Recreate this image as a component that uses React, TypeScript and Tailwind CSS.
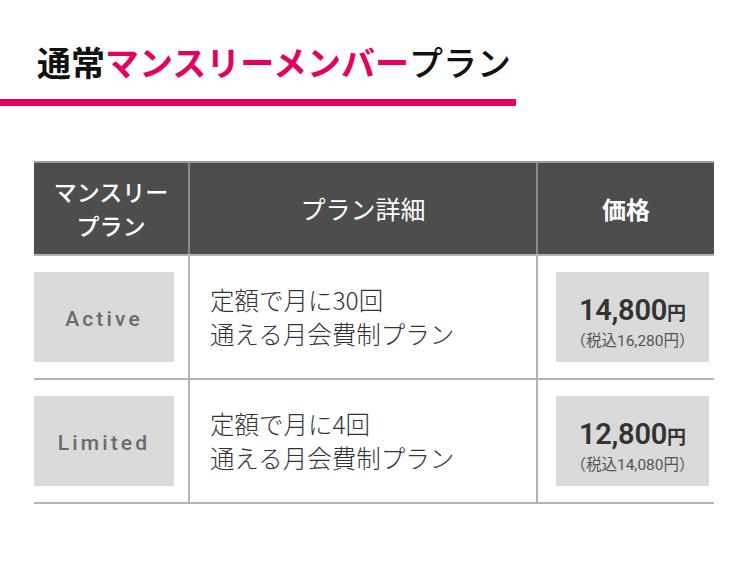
import React from "react";

type Plan = {
  name: string;
  line1: string;
  price: string;
  taxIncluded: string;
};

const plans: Plan[] = [
  { name: "Active", line1: "定額で月に30回", price: "14,800", taxIncluded: "16,280" },
  { name: "Limited", line1: "定額で月に4回", price: "12,800", taxIncluded: "14,080" },
];

const jp = "font-['Noto_Sans_CJK_JP',sans-serif]";
const num = "font-['Roboto','Noto_Sans_CJK_JP',sans-serif]";

function PlanRow({ plan }: { plan: Plan }) {
  return (
    <div className="grid grid-cols-[154px_348px_178px] h-[124px] border-b-2 border-[#b4b4b4]">
      <div className="flex items-center pr-[14px]">
        <div
          className={`w-full h-[90px] bg-[#dadada] flex items-center justify-center pt-[6px] text-[21px] tracking-[0.15em] font-medium text-[#6a6a6a] ${num}`}
        >
          {plan.name}
        </div>
      </div>
      <div className="border-l-2 border-[#b4b4b4] flex flex-col justify-center pl-[20px]">
        <p className={`text-[24.5px] leading-[34px] font-light text-[#333] ${jp}`}>
          {plan.line1}
          <br />
          通える月会費制プラン
        </p>
      </div>
      <div className="border-l-2 border-[#b4b4b4] flex items-center pl-[18px] pr-[5px]">
        <div className="w-full h-[90px] bg-[#dadada] flex flex-col items-center justify-center pt-[12px] text-[#333]">
          <p className={`leading-none ${num}`}>
            <span className="text-[29px] font-semibold tracking-[-0.01em]">{plan.price}</span>
            <span className={`text-[19px] font-bold ${jp}`}>円</span>
          </p>
          <p className={`mt-[9px] text-[15.5px] leading-none text-[#555] ${num}`}>
            （税込{plan.taxIncluded}円）
          </p>
        </div>
      </div>
    </div>
  );
}

export default function App() {
  return (
    <div className="w-[750px] h-[563px] bg-white overflow-hidden">
      <h1 className={`pt-[45px] pl-[37px] text-[34px] leading-[34px] font-bold text-[#111] ${jp}`}>
        通常<span className="text-[#e5005f]">マンスリーメンバー</span>
        <span className="font-medium">プラン</span>
      </h1>
      <div className="mt-[20px] w-[516px] h-[7px] bg-[#e5005f]" />

      <div className="mt-[55px] ml-[34px] w-[680px]">
        <div className="grid grid-cols-[154px_348px_178px] h-[95px] border-t-2 border-[#9a9a9a] border-b-2 border-b-[#b4b4b4] bg-[#4d4d4d] text-white">
          <div className={`flex items-center justify-center text-center text-[23px] leading-[34px] font-medium pb-[2px] ${jp}`}>
            マンスリー
            <br />
            プラン
          </div>
          <div className={`border-l-2 border-[#8a8a8a] flex items-center justify-center text-[25px] ${jp}`}>
            プラン詳細
          </div>
          <div className={`border-l-2 border-[#8a8a8a] flex items-center justify-center text-[24px] font-bold ${jp}`}>
            価格
          </div>
        </div>
        {plans.map((plan) => (
          <PlanRow key={plan.name} plan={plan} />
        ))}
      </div>
    </div>
  );
}
